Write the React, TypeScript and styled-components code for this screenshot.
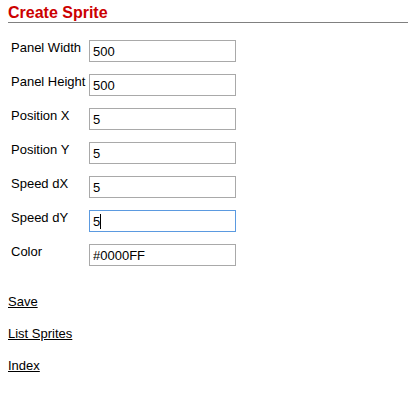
import React from "react";
import styled, { createGlobalStyle } from "styled-components";

const GlobalStyle = createGlobalStyle`
  html, body {
    margin: 0;
    padding: 0;
    background: #ffffff;
  }
  body {
    font-family: "Liberation Sans", Arial, sans-serif;
    font-size: 13px;
    color: #000000;
  }
`;

const Page = styled.div`
  padding: 0 8px;
  width: 400px;
`;

const Title = styled.h2`
  margin: 0;
  padding-top: 4px;
  font-size: 16px;
  line-height: 18px;
  font-weight: bold;
  color: #cc0000;
  border-bottom: 1px solid #808080;
  width: 400px;
`;

const Form = styled.div`
  display: grid;
  grid-template-columns: 78px 147px;
  grid-auto-rows: 34px;
  margin-top: 17px;
  padding-left: 3px;
  align-items: start;
`;

const Label = styled.label`
  font-size: 13px;
  line-height: 15px;
  padding-top: 0;
  white-space: nowrap;
`;

const Field = styled.div`
  position: relative;
  width: 147px;
  height: 22px;
`;

const Input = styled.input<{ $active?: boolean }>`
  box-sizing: border-box;
  width: 147px;
  height: 22px;
  margin: 0;
  padding: 1px 3px 0 3px;
  border: 1px solid ${(p) => (p.$active ? "#5b9ae0" : "#a9a9a9")};
  font-family: "Liberation Sans", Arial, sans-serif;
  font-size: 13px;
  color: #000000;
  background: #ffffff;
  outline: none;
`;

const Caret = styled.span`
  position: absolute;
  left: 11px;
  top: 4px;
  width: 1px;
  height: 15px;
  background: #000000;
`;

const Links = styled.div`
  display: flex;
  flex-direction: column;
  align-items: flex-start;
  gap: 17px;
  margin-top: 16px;
`;

const Link = styled.a`
  font-size: 13px;
  line-height: 15px;
  color: #000000;
  text-decoration: underline;
  cursor: pointer;
`;

const fields = [
  { label: "Panel Width", value: "500" },
  { label: "Panel Height", value: "500" },
  { label: "Position X", value: "5" },
  { label: "Position Y", value: "5" },
  { label: "Speed dX", value: "5" },
  { label: "Speed dY", value: "5", active: true },
  { label: "Color", value: "#0000FF" },
];

export default function App() {
  return (
    <>
      <GlobalStyle />
      <Page>
        <Title>Create Sprite</Title>
        <Form>
          {fields.map((f) => (
            <React.Fragment key={f.label}>
              <Label>{f.label}</Label>
              <Field>
                <Input $active={f.active} defaultValue={f.value} readOnly />
                {f.active && <Caret />}
              </Field>
            </React.Fragment>
          ))}
        </Form>
        <Links>
          <Link>Save</Link>
          <Link>List Sprites</Link>
          <Link>Index</Link>
        </Links>
      </Page>
    </>
  );
}
